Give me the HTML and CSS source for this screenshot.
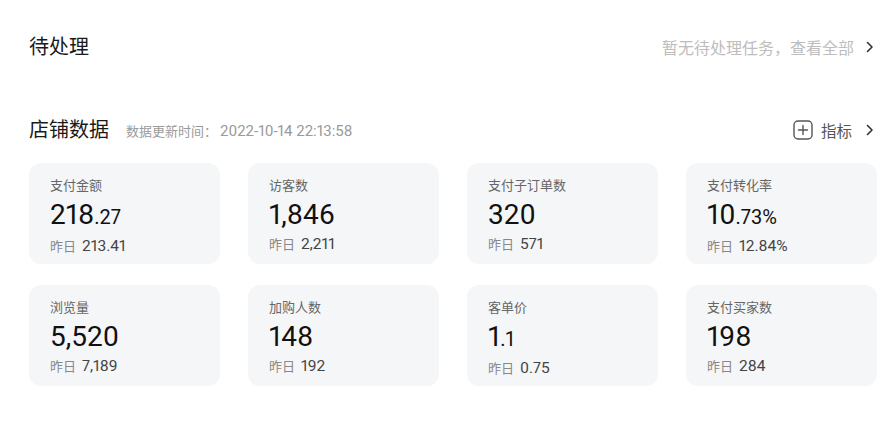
FILE: index.html
```html
<!DOCTYPE html>
<html lang="zh-CN">
<head>
<meta charset="utf-8">
<link rel="stylesheet" href="styles.css">
</head>
<body>
<div class="page">
  <div class="todo">
    <div class="title">待处理</div>
    <a class="more">
      <span>暂无待处理任务，查看全部</span>
      <svg class="chev" width="8" height="12" viewBox="0 0 8 12"><path d="M1.5 1.5 L6 6 L1.5 10.5" fill="none" stroke="#333" stroke-width="1.6" stroke-linecap="round" stroke-linejoin="round"/></svg>
    </a>
  </div>
  <div class="shop-head">
    <div class="left">
      <div class="title">店铺数据</div>
      <div class="time">数据更新时间：<span>2022-10-14 22:13:58</span></div>
    </div>
    <a class="metric">
      <svg width="20" height="20" viewBox="0 0 20 20"><rect x="1" y="1" width="18" height="18" rx="4" fill="none" stroke="#555" stroke-width="1.4"/><path d="M10 5.5 V14.5 M5.5 10 H14.5" stroke="#555" stroke-width="1.4" stroke-linecap="round"/></svg>
      <span>指标</span>
      <svg class="chev" width="8" height="12" viewBox="0 0 8 12"><path d="M1.5 1.5 L6 6 L1.5 10.5" fill="none" stroke="#333" stroke-width="1.6" stroke-linecap="round" stroke-linejoin="round"/></svg>
    </a>
  </div>
  <div class="grid">
    <div class="card"><div class="label">支付金额</div><div class="value">218<small>.27</small></div><div class="meta">昨日<span>213.41</span></div></div>
    <div class="card"><div class="label">访客数</div><div class="value">1,846</div><div class="meta">昨日<span>2,211</span></div></div>
    <div class="card"><div class="label">支付子订单数</div><div class="value">320</div><div class="meta">昨日<span>571</span></div></div>
    <div class="card"><div class="label">支付转化率</div><div class="value">10<small>.73%</small></div><div class="meta">昨日<span>12.84%</span></div></div>
    <div class="card"><div class="label">浏览量</div><div class="value">5,520</div><div class="meta">昨日<span>7,189</span></div></div>
    <div class="card"><div class="label">加购人数</div><div class="value">148</div><div class="meta">昨日<span>192</span></div></div>
    <div class="card"><div class="label">客单价</div><div class="value">1<small>.1</small></div><div class="meta">昨日<span>0.75</span></div></div>
    <div class="card"><div class="label">支付买家数</div><div class="value">198</div><div class="meta">昨日<span>284</span></div></div>
  </div>
</div>
</body>
</html>
```

FILE: styles.css
```css
* { box-sizing: border-box; }
html, body { margin: 0; background: #fff; }
body {
  font-family: Roboto, "Noto Sans CJK SC", "Noto Sans", sans-serif;
  color: #222;
  font-variant-numeric: proportional-nums;
}
.page { padding: 0 19px 0 29px; width: 896px; }
.todo {
  height: 94px;
  display: flex;
  align-items: center;
  justify-content: space-between;
}
.title { font-size: 20px; color: #1a1a1a; line-height: 28px; }
.more {
  display: flex; align-items: center; gap: 12px;
  font-size: 16px; color: #bdbdbd;
  padding-right: 3px;
}
.chev { display: block; }
.shop-head {
  margin-top: 18px;
  height: 36px;
  display: flex;
  align-items: center;
  justify-content: space-between;
  margin-bottom: 15px;
}
.shop-head .left { display: flex; align-items: center; gap: 17px; }
.time { font-size: 13px; color: #9a9a9a; display: flex; align-items: baseline; }
.time span { font-size: 15px; margin-left: 3px; }
.metric {
  display: flex; align-items: center; gap: 0;
  font-size: 15.5px; color: #555;
  padding-right: 3px;
}
.metric span { margin: 0 14px 0 8px; }
.grid {
  display: grid;
  grid-template-columns: repeat(4, 191px);
  column-gap: 28px;
  row-gap: 21px;
}
.card {
  height: 101px;
  background: #f5f6f8;
  border-radius: 12px;
  padding: 14px 21px 0;
  display: flex;
  flex-direction: column;
}
.label { font-size: 13px; line-height: 18px; color: #666; }
.value {
  margin-top: 3px;
  font-size: 28px; line-height: 34px; color: #111;
}
.value small { font-size: 20px; }
.meta { margin-top: 3px; font-size: 13px; line-height: 18px; color: #888; display: flex; align-items: baseline; }
.meta span { color: #444; font-size: 15.5px; margin-left: 6px; }
```
